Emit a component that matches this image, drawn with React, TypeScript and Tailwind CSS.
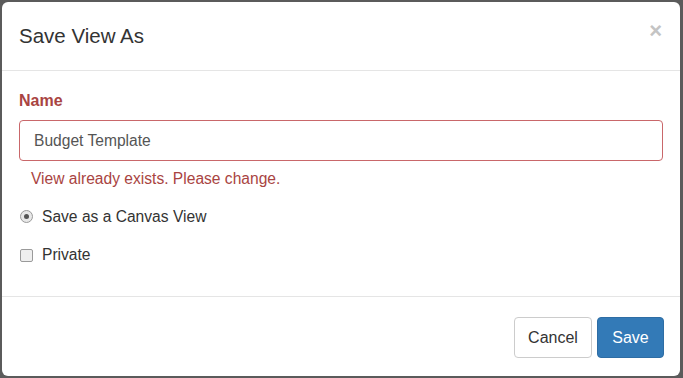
export default function App() {
  return (
    <div className="w-[683px] h-[378px] bg-[#5b5b5b] p-[2px] pr-[3px] font-['Liberation_Sans',Arial,sans-serif]">
      <div className="h-full bg-white rounded-[6px] flex flex-col">
        <div className="h-[69px] border-b border-[#e5e5e5] flex items-center justify-between pl-[17px] pr-[18px]">
          <h4 className="text-[20.5px] text-[#333] leading-none">Save View As</h4>
          <button className="text-[#c4c4c4] text-[22px] font-bold leading-none -mt-[10px]">×</button>
        </div>
        <div className="flex-1 px-[17px] pt-[21px]">
          <label className="block text-[16px] font-bold text-[#a94442] leading-[18px]">Name</label>
          <div className="mt-[10px] h-[41px] rounded-[4px] border border-[#c9676a] flex items-center px-[14px] text-[15.6px] text-[#555]">
            Budget Template
          </div>
          <p className="mt-[9px] pl-[12px] text-[15.6px] text-[#a94442] leading-[18px]">View already exists. Please change.</p>
          <div className="mt-[17px] flex items-center gap-[9px] text-[15.6px] text-[#333]">
            <span className="ml-[1px] w-[13px] h-[13px] rounded-full border border-[#9a9a9a] bg-[#e8e8e8] flex items-center justify-center">
              <span className="w-[5px] h-[5px] rounded-full bg-[#555]" />
            </span>
            <span>Save as a Canvas View</span>
          </div>
          <div className="mt-[15px] flex items-center gap-[9px] text-[15.6px] text-[#333]">
            <span className="ml-[1px] w-[13px] h-[13px] rounded-[2px] border border-[#9a9a9a] bg-[#efefef]" />
            <span>Private</span>
          </div>
        </div>
        <div className="h-[80px] border-t border-[#e5e5e5] flex items-center justify-end gap-[5px] pr-[16px] pt-[2px]">
          <button className="h-[41px] w-[78px] rounded-[4px] border border-[#ccc] bg-white text-[16px] text-[#333]">Cancel</button>
          <button className="h-[41px] w-[67px] rounded-[4px] border border-[#2e6da4] bg-[#337ab7] text-[16px] text-white">Save</button>
        </div>
      </div>
    </div>
  );
}
